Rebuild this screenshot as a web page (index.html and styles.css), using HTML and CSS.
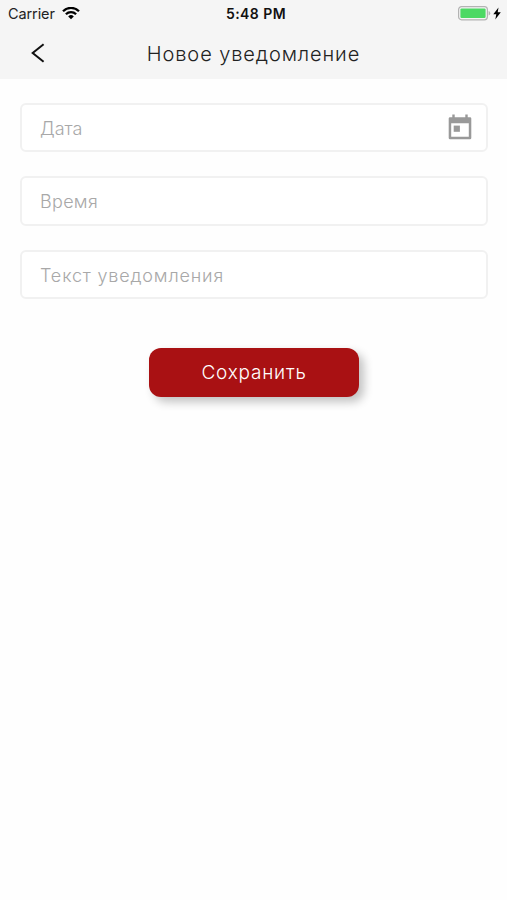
FILE: index.html
```
<!DOCTYPE html>
<html lang="ru">

<head>
    <meta charset="UTF-8">
    <meta name="viewport" content="width=device-width, initial-scale=1.0">
    <title>Новое уведомление</title>
    <link rel="stylesheet" href="styles.css">
</head>

<body>
    <header class="header">
        <div class="status-bar">
            <div class="carrier">
                <span class="carrier-name">Carrier</span>
                <svg class="wifi" width="18" height="14" viewBox="0 0 18 14" fill="none" stroke="currentColor"
                    stroke-width="2.3">
                    <path d="M1 4.2a11.4 11.4 0 0 1 16 0"></path>
                    <path d="M3.9 7.2a7.2 7.2 0 0 1 10.2 0"></path>
                    <path d="M9 12.2L6.2 9.4a4 4 0 0 1 5.6 0z" fill="currentColor" stroke="none"></path>
                </svg>
            </div>
            <span class="time">5:48 PM</span>
            <div class="battery">
                <svg width="33" height="15" viewBox="0 0 33 15">
                    <rect x=".6" y=".6" width="28.8" height="13.2" rx="3" fill="none" stroke="#b3b3b3"
                        stroke-width="1.2"></rect>
                    <rect x="2.4" y="2.4" width="25.2" height="9.6" rx="1.2" fill="#4cd964"></rect>
                    <path d="M30.6 5v4.4a2.3 2.3 0 0 0 0-4.4z" fill="#b3b3b3"></path>
                </svg>
                <svg width="8" height="13" viewBox="0 0 8 13">
                    <path d="M5.5.6L.3 7.3h3L2.3 12.4 7.8 5.3H4.7z" fill="#000"></path>
                </svg>
            </div>
        </div>
        <div class="nav">
            <button class="back" aria-label="Назад">
                <svg width="14" height="20" viewBox="0 0 14 20" fill="none" stroke="currentColor" stroke-width="2">
                    <path d="M12.6 1.3L1.7 10l10.9 8.7"></path>
                </svg>
            </button>
            <h1>Новое уведомление</h1>
        </div>
    </header>

    <form class="form">
        <div class="field">
            <input class="date" type="text" placeholder="Дата" aria-label="Дата">
            <svg class="calendar" width="24" height="26" viewBox="0 0 24 26" fill="#999">
                <path fill-rule="evenodd"
                    d="M4.3.5h2.4v2.7h10.6V.5h2.4v2.7H22a1.3 1.3 0 0 1 1.3 1.3V24a1.3 1.3 0 0 1-1.3 1.3H2A1.3 1.3 0 0 1 .7 24V4.5A1.3 1.3 0 0 1 2 3.2h2.3zM3.2 9.2v13.6h17.6V9.2z"></path>
                <rect x="5.7" y="11.6" width="6.2" height="6.2"></rect>
            </svg>
        </div>
        <div class="field">
            <input class="hour" type="text" placeholder="Время" aria-label="Время">
        </div>
        <div class="field">
            <input class="message" type="text" placeholder="Текст уведомления" aria-label="Текст уведомления">
        </div>
        <button class="save" type="button">Сохранить</button>
    </form>
</body>

</html>
```

FILE: styles.css
```
*,
*::before,
*::after {
    box-sizing: border-box;
    margin: 0;
    padding: 0;
}

:root {
    --red: #a91113;
    --bar: #f5f5f5;
    --border: #f1f1f1;
    --placeholder: #a8a8a8;
}

body {
    min-height: 100vh;
    background-color: #fefefe;
    font-family: Inter, sans-serif;
    color: #222;
}

.header {
    height: 79px;
    background-color: var(--bar);
}

.status-bar {
    display: grid;
    grid-template-columns: 1fr auto 1fr;
    align-items: center;
    height: 27px;
    padding: 0 6px 0 8px;
}

.carrier {
    display: flex;
    align-items: center;
    gap: 7px;
}

.carrier-name {
    font-size: 14.5px;
    letter-spacing: -0.1px;
}

.wifi {
    color: #000;
}

.time {
    padding-left: 3px;
    font-size: 14px;
    font-weight: 600;
    letter-spacing: 0.45px;
    color: #111;
}

.battery {
    display: flex;
    align-items: center;
    justify-content: flex-end;
    gap: 2px;
}

.nav {
    display: grid;
    grid-template-columns: 75px 1fr 75px;
    align-items: center;
    height: 52px;
}

.back {
    display: flex;
    justify-content: center;
    border: none;
    background: none;
    color: #111;
}

h1 {
    padding-top: 2px;
    font-size: 20px;
    font-weight: 300;
    letter-spacing: 0.9px;
    text-align: center;
    white-space: nowrap;
}

.form {
    display: flex;
    flex-direction: column;
    gap: 24px;
    padding: 24px 19px 0 20px;
}

.field {
    display: flex;
    align-items: center;
    height: 49.3px;
    padding: 0 14px 0 18px;
    border: 2px solid var(--border);
    border-radius: 6px;
    background-color: #fff;
}

input {
    flex: 1;
    min-width: 0;
    padding-top: 2px;
    border: none;
    outline: none;
    background: none;
    font: 300 18px Inter, sans-serif;
    color: #222;
}

input::placeholder {
    color: var(--placeholder);
    opacity: 1;
}

.calendar {
    margin-bottom: 2px;
}

.hour {
    letter-spacing: 0.3px;
}

.message {
    letter-spacing: 0.83px;
}

.save {
    align-self: center;
    width: 210px;
    height: 49px;
    margin-top: 25px;
    border: none;
    border-radius: 12px;
    background-color: var(--red);
    box-shadow: 5px 5px 10px rgba(0, 0, 0, 0.24);
    font: 300 19px Inter, sans-serif;
    letter-spacing: 0.8px;
    color: #fff;
}
```
